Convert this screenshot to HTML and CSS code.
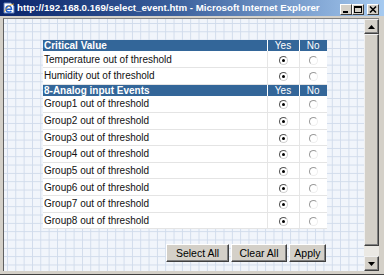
FILE: index.html
```html
<!DOCTYPE html>
<html>
<head>
<meta charset="utf-8">
<title>select_event</title>
<link rel="stylesheet" href="styles.css">
</head>
<body>
<div class="window">
  <div class="titlebar">
    <svg class="ie-icon" width="12" height="12" viewBox="0 0 12 12">
      <path d="M1 1h7l3 3v7H1z" fill="#fff" stroke="#5a7ab8" stroke-width="1"/>
      <path d="M3.2 7.2h5.3c0-2-1-3.2-2.6-3.2S3 5.3 3 7s1.1 3 2.9 3c1.1 0 1.9-.4 2.4-1.2" fill="none" stroke="#1f5fd0" stroke-width="1.5"/>
      <path d="M1.5 9.5c2-4 6-7 9.5-7.5" fill="none" stroke="#e0a020" stroke-width="0.9"/>
    </svg>
    <span class="title">http://192.168.0.169/select_event.htm - Microsoft Internet Explorer</span>
    <div class="controls">
      <span class="cbtn"><svg width="10" height="9" viewBox="0 0 10 9"><rect x="2" y="6" width="5" height="2" fill="#000"/></svg></span>
      <span class="cbtn"><svg width="10" height="9" viewBox="0 0 10 9"><rect x="1.5" y="1.5" width="7" height="6" fill="none" stroke="#000"/><rect x="1" y="1" width="8" height="2" fill="#000"/></svg></span>
      <span class="cbtn close"><svg width="10" height="9" viewBox="0 0 10 9"><path d="M2 1.5l6 6M8 1.5l-6 6" stroke="#000" stroke-width="1.6"/></svg></span>
    </div>
  </div>
  <div class="frame">
    <div class="viewport">
      <div class="page">
        <div class="panel">
          <table class="events">
            <colgroup><col class="c-name"><col class="c-yes"><col class="c-no"></colgroup>
            <tr class="hrow"><th class="hd">Critical Value</th><th class="yn">Yes</th><th class="yn">No</th></tr>
            <tr class="row"><td>Temperature out of threshold</td><td class="c"><span class="radio on"></span></td><td class="c"><span class="radio"></span></td></tr>
            <tr class="row"><td>Humidity out of threshold</td><td class="c"><span class="radio on"></span></td><td class="c"><span class="radio"></span></td></tr>
            <tr class="hrow"><th class="hd">8-Analog input Events</th><th class="yn">Yes</th><th class="yn">No</th></tr>
            <tr class="row"><td>Group1 out of threshold</td><td class="c"><span class="radio on"></span></td><td class="c"><span class="radio"></span></td></tr>
            <tr class="row"><td>Group2 out of threshold</td><td class="c"><span class="radio on"></span></td><td class="c"><span class="radio"></span></td></tr>
            <tr class="row"><td>Group3 out of threshold</td><td class="c"><span class="radio on"></span></td><td class="c"><span class="radio"></span></td></tr>
            <tr class="row"><td>Group4 out of threshold</td><td class="c"><span class="radio on"></span></td><td class="c"><span class="radio"></span></td></tr>
            <tr class="row"><td>Group5 out of threshold</td><td class="c"><span class="radio on"></span></td><td class="c"><span class="radio"></span></td></tr>
            <tr class="row"><td>Group6 out of threshold</td><td class="c"><span class="radio on"></span></td><td class="c"><span class="radio"></span></td></tr>
            <tr class="row"><td>Group7 out of threshold</td><td class="c"><span class="radio on"></span></td><td class="c"><span class="radio"></span></td></tr>
            <tr class="row"><td>Group8 out of threshold</td><td class="c"><span class="radio on"></span></td><td class="c"><span class="radio"></span></td></tr>
          </table>
          <div class="actions">
            <button class="btn b-select">Select All</button>
            <button class="btn b-clear">Clear All</button>
            <button class="btn b-apply">Apply</button>
          </div>
        </div>
      </div>
      <div class="scrollbar">
        <div class="sb-btn"><svg width="7" height="4" viewBox="0 0 7 4"><path d="M3.5 0L7 4H0z" fill="#000"/></svg></div>
        <div class="sb-thumb"></div>
        <div class="sb-track"></div>
        <div class="sb-btn"><svg width="7" height="4" viewBox="0 0 7 4"><path d="M0 0h7L3.5 4z" fill="#000"/></svg></div>
      </div>
    </div>
  </div>
</div>
</body>
</html>
```

FILE: styles.css
```css
* { box-sizing: border-box; }
html, body { margin: 0; padding: 0; }
body {
  font-family: "Liberation Sans", Arial, sans-serif;
  background: #d4d0c8;
}
.window {
  width: 384px;
  height: 275px;
  display: flex;
  flex-direction: column;
  background: #d4d0c8;
  overflow: hidden;
}
.titlebar {
  height: 16px;
  flex: none;
  display: flex;
  align-items: center;
  background: linear-gradient(to right, #0a246a 0%, #3a5f9c 45%, #a6caf0 100%);
  color: #fff;
  padding-left: 3px;
}
.ie-icon { flex: none; margin-right: 2px; }
.title {
  font-weight: bold;
  font-size: 9.7px;
  line-height: 16px;
  white-space: nowrap;
  flex: 1;
  overflow: hidden;
}
.controls {
  display: flex;
  align-items: center;
  margin-right: 5px;
  margin-top: 2px;
}
.cbtn {
  width: 12px;
  height: 11px;
  background: #d4d0c8;
  border: 1px solid;
  border-color: #fff #404040 #404040 #fff;
  display: flex;
  align-items: center;
  justify-content: center;
}
.cbtn.close { margin-left: 3px; }
.frame {
  flex: 1;
  display: flex;
  padding: 2px 5px 3px 3px;
  border-bottom: 1px solid #404040;
}
.viewport {
  flex: 1;
  display: flex;
  border-top: 1px solid #808080;
  border-left: 1px solid #606060;
  background-color: #f1f5fb;
  background-image:
    linear-gradient(to right, #d0dbeb 1px, transparent 1px),
    linear-gradient(to bottom, #d0dbeb 1px, transparent 1px);
  background-size: 8.33px 8.33px;
  background-position: 3px 4px;
}
.page {
  flex: 1;
  padding: 20.5px 0 0 39px;
}
.panel { width: 284px; }
.events {
  border-collapse: collapse;
  table-layout: fixed;
  width: 284px;
  font-size: 10px;
  color: #111;
}
.c-name { width: 224px; }
.c-yes { width: 32px; }
.c-no { width: 28px; }
.hrow { height: 11.6px; }
.hrow th {
  background: #336699;
  color: #fff;
  padding: 0 1px;
  line-height: 11px;
  height: 11.6px;
}
.hrow th.hd { text-align: left; font-weight: bold; }
.hrow th.yn {
  font-weight: normal;
  text-align: center;
  border-left: 1px solid #fff;
}
.row { height: 16.6px; }
.row td {
  background: #fff;
  padding: 0 1px;
  height: 16.6px;
  border-bottom: 1px solid #e4e4e4;
  white-space: nowrap;
}
.row td.c {
  border-left: 1px solid #e6e6e6;
  text-align: center;
}
.radio {
  display: inline-block;
  width: 9px;
  height: 9px;
  border-radius: 50%;
  border: 1px solid;
  border-color: #9a9a9a #eeeeee #eeeeee #9a9a9a;
  background: #fff;
  vertical-align: middle;
  position: relative;
}
.radio.on {
  border-color: #555 #d0d0d0 #d0d0d0 #555;
}
.radio.on::after {
  content: "";
  position: absolute;
  left: 2px;
  top: 2px;
  width: 3px;
  height: 3px;
  border-radius: 50%;
  background: #000;
}
.actions {
  display: flex;
  justify-content: flex-end;
  gap: 2px;
  margin-top: 15px;
}
.btn {
  height: 18px;
  padding: 0;
  font-family: "Liberation Sans", Arial, sans-serif;
  font-size: 10.5px;
  color: #000;
  background: #d4d0c8;
  border: 1px solid;
  border-color: #fff #404040 #404040 #fff;
  box-shadow: inset -1px -1px 0 #808080;
}
.b-select { width: 63px; }
.b-clear { width: 56px; }
.b-apply { width: 37px; margin-right: 1px; }
.scrollbar {
  width: 15px;
  flex: none;
  display: flex;
  flex-direction: column;
}
.sb-btn, .sb-thumb {
  background: #d4d0c8;
  border: 1px solid;
  border-color: #f0f0f0 #404040 #404040 #f0f0f0;
  box-shadow: inset -1px -1px 0 #808080;
}
.sb-btn {
  height: 15px;
  flex: none;
  display: flex;
  align-items: center;
  justify-content: center;
}
.sb-thumb { height: 212px; flex: none; }
.sb-track { flex: 1; background: #ebe9e4; }
```
